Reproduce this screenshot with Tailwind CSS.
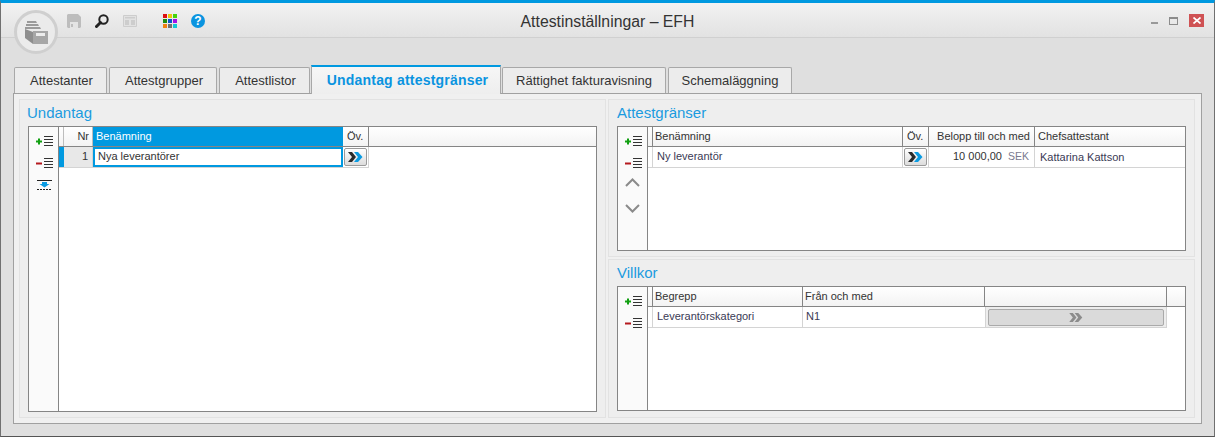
<!DOCTYPE html>
<html lang="sv">
<head>
    <meta charset="UTF-8">
    <title>Attestinställningar – EFH</title>
    <script src="https://cdn.jsdelivr.net/npm/@tailwindcss/browser@4"></script>
</head>
<body class="bg-[#dfdfdf] overflow-hidden">

    <!-- Shared toolbar icons -->
    <svg class="hidden">
        <symbol id="add" viewBox="0 0 17 11">
            <path d="M0 4.500h6v2H0zM2 2.500h2v6H2z" fill="#12a012"/>
            <path d="M8 .5h9M8 3.500h9M8 6.500h9M8 9.500h9" stroke="#333" fill="none"/>
        </symbol>
        <symbol id="remove" viewBox="0 0 17 11">
            <path d="M0 4.500h6v2H0z" fill="#b5191e"/>
            <path d="M8 .5h9M8 3.500h9M8 6.500h9M8 9.500h9" stroke="#333" fill="none"/>
        </symbol>
        <symbol id="go" viewBox="0 0 15 10">
            <path d="M0 0h4l4 5-4 5H0l4-5z" fill="#2b2b2b"/>
            <path d="M6 0h4l4.500 5-4.500 5H6l4-5z" fill="#0a9be2"/>
        </symbol>
    </svg>

    <div class="w-[1215px] h-[437px] flex flex-col border-t-[3px] border-t-[#0099e0] border-x border-b border-x-[#707070] border-b-[#555] bg-[#dfdfdf] font-['Liberation_Sans',sans-serif] relative">

        <!-- Round logo over the title bar -->
        <div class="absolute left-[13px] top-[7px] w-[44px] h-[44px] rounded-full border-[3px] border-[#cfcfcf] bg-[#ebebeb] flex items-center justify-center z-10">
            <svg width="23" height="23" viewBox="0 0 23 23">
                <path d="M2 0h9l1 2H2zM1 3h12l1 2H1zM0 6h15l1 2H0z" fill="#9a9a9a"/>
                <path d="M0 8l8 3v12l-8-6z" fill="#8e8e8e"/>
                <path d="M8 10h15v13H8z" fill="#a6a6a6"/>
                <path d="M11 12h9v3h-9z" fill="#ececec"/>
            </svg>
        </div>

        <!-- Title bar -->
        <header class="h-[35px] shrink-0 grid grid-cols-[1fr_auto_1fr] bg-gradient-to-b from-[#f2f2f2] to-[#e2e2e2] border-b border-[#d0d0d0]">
            <div class="flex items-start pl-[66px] pt-[11px]">
                <svg width="14" height="14" viewBox="0 0 14 14" class="mr-[14px]">
                    <path d="M1 0h10l3 3v10l-1 1H1l-1-1V1z" fill="#bdbdbd"/>
                    <path d="M3 8h8v6H3z" fill="#e4e4e4"/>
                    <path d="M4 10h2v3H4z" fill="#bdbdbd"/>
                </svg>
                <svg width="14" height="14" viewBox="0 0 14 14" class="mr-[14px]">
                    <circle cx="8.500" cy="5.500" r="4.200" fill="none" stroke="#222" stroke-width="2"/>
                    <path d="M5.500 8.500 1.500 12.500" stroke="#222" stroke-width="3" stroke-linecap="round"/>
                </svg>
                <svg width="14" height="12" viewBox="0 0 14 12" class="mr-[26px] mt-px">
                    <path d="M.5.500h13v11H.5z" fill="#e2e2e2" stroke="#cdcdcd"/>
                    <path d="M2 2h10v1.500H2zM2 5h4v5H2zM8 5h4v5H8z" fill="#cdcdcd"/>
                </svg>
                <div class="grid grid-cols-3 gap-px w-[14px] h-[14px] mr-[14px]">
                    <div class="bg-[#dd1010]"></div><div class="bg-[#ecc80c]"></div><div class="bg-[#44d40c]"></div>
                    <div class="bg-[#1e8c10]"></div><div class="bg-[#0a55cc]"></div><div class="bg-[#a012e8]"></div>
                    <div class="bg-[#f08010]"></div><div class="bg-[#707070]"></div><div class="bg-[#10c8d4]"></div>
                </div>
                <div class="w-[14px] h-[14px] rounded-full bg-[#0a94e0] text-white text-[12px] leading-[14px] font-bold text-center">?</div>
            </div>
            <h1 class="text-[15.8px] leading-[35px] pt-px text-[#333]">Attestinställningar – EFH</h1>
            <div class="flex items-start justify-end pt-[11px] pr-[10px]">
                <div class="w-[7px] h-[2px] bg-[#999] mt-[8px] mr-[11px]"></div>
                <div class="w-[9px] h-[8px] border border-t-2 border-[#8c8c8c] mt-[3px] mr-[11px]"></div>
                <div class="w-[15px] h-[13px] bg-[#cf5254] flex items-center justify-center">
                    <svg width="8" height="7" viewBox="0 0 8 7"><path d="M.5.500 7.500 6.500M7.500.500.500 6.500" stroke="#fff" stroke-width="1.700"/></svg>
                </div>
            </div>
        </header>

        <main class="flex-1 flex flex-col pl-[12px] pt-[27px]">
            <!-- Tabs -->
            <nav class="flex items-end h-[29px] pl-px gap-[2px] text-[13px] text-[#333] relative z-10 -mb-px">
                <div class="w-[93px] h-[26px] mb-px pl-[2px] flex items-center justify-center bg-[#ececec] border border-b-0 border-[#a8a8a8] rounded-t-[2px]">Attestanter</div>
                <div class="w-[108px] h-[26px] mb-px pl-[2px] flex items-center justify-center bg-[#ececec] border border-b-0 border-[#a8a8a8] rounded-t-[2px]">Attestgrupper</div>
                <div class="w-[91px] h-[26px] mb-px pl-[2px] flex items-center justify-center bg-[#ececec] border border-b-0 border-[#a8a8a8] rounded-t-[2px] mr-[-1px]">Attestlistor</div>
                <div class="w-[190px] h-[29px] flex items-center justify-center pl-[3px] bg-gradient-to-b from-[#f6f6f6] to-[#eeeeee] border-x border-[#a8a8a8] border-t-[2px] border-t-[#0099e0] text-[14px] tracking-[0.2px] font-bold text-[#0a94e0] mr-[-1px]">Undantag attestgränser</div>
                <div class="w-[164px] h-[26px] mb-px flex items-center justify-center bg-[#ececec] border border-b-0 border-[#a8a8a8] rounded-t-[2px]">Rättighet fakturavisning</div>
                <div class="w-[124px] h-[26px] mb-px flex items-center justify-center bg-[#ececec] border border-b-0 border-[#a8a8a8] rounded-t-[2px]">Schemaläggning</div>
            </nav>

            <!-- Tab panel -->
            <section class="w-[1189px] h-[331px] border border-[#a0a0a0] bg-[#f0f0f0] pt-[5px] pl-[5px] flex gap-[2px]">

                <!-- Undantag -->
                <div class="w-[587px] h-[319px] border border-[#e2e2e2] bg-[#eeeeee] px-[8px] flex flex-col">
                    <h2 class="h-[26px] -ml-px text-[15px] leading-[25px] text-[#1a9be0]">Undantag</h2>
                    <div class="w-[569px] h-[286px] border border-[#858585] bg-white flex text-[11px] text-[#333]">
                        <div class="w-[30px] shrink-0 border-r border-[#858585] bg-[#fafafa] flex flex-col items-center pt-[9px] pl-[2px] gap-[11px]">
                            <svg width="17" height="11"><use href="#add"/></svg>
                            <svg width="17" height="11"><use href="#remove"/></svg>
                            <svg width="15" height="10" viewBox="0 0 15 10">
                                <path d="M0 .5h15" stroke="#222"/>
                                <path d="M5 2h5v2h2.500L7.500 7.500 2.500 4H5z" fill="#0a9be2"/>
                                <path d="M0 9.500h15" stroke="#222" stroke-dasharray="2 1"/>
                            </svg>
                        </div>
                        <div class="flex-1">
                            <div class="h-[20px] flex border-b border-[#858585] bg-gradient-to-b from-white to-[#f3f3f3] leading-[18px]">
                                <div class="w-[5px] border-r border-[#bdbdbd]"></div>
                                <div class="w-[29px] pr-[3px] text-right border-r border-[#bdbdbd]">Nr</div>
                                <div class="w-[250px] px-[3px] bg-[#0099e0] text-white">Benämning</div>
                                <div class="w-[26px] pl-[4px] border-r border-[#858585]">Öv.</div>
                            </div>
                            <div class="h-[21px] w-[310px] flex border-b border-[#d4d4d4]">
                                <div class="w-[5px] bg-[#0099e0]"></div>
                                <div class="w-[29px] bg-[#e8e8e8] pr-[4px] text-right leading-[19px] border-r border-[#d4d4d4]">1</div>
                                <div class="w-[250px] border-[2px] border-[#0099e0] px-[3px] leading-[15px]">Nya leverantörer</div>
                                <div class="w-[26px] border-r border-[#d4d4d4] flex justify-center items-center">
                                    <div class="w-[23px] h-[18px] rounded-[2px] border border-[#9a9a9a] bg-gradient-to-b from-white to-[#dcdcdc] flex items-center justify-center">
                                        <svg width="15" height="10"><use href="#go"/></svg>
                                    </div>
                                </div>
                            </div>
                        </div>
                    </div>
                </div>

                <div class="flex flex-col gap-[2px]">
                    <!-- Attestgränser -->
                    <div class="w-[587px] h-[158px] border border-[#e2e2e2] bg-[#eeeeee] px-[8px] flex flex-col">
                        <h2 class="h-[26px] text-[15px] leading-[25px] text-[#1a9be0]">Attestgränser</h2>
                        <div class="w-[569px] h-[125px] border border-[#858585] bg-white flex text-[11px] text-[#333]">
                            <div class="w-[30px] shrink-0 border-r border-[#858585] bg-[#fafafa] flex flex-col items-center pt-[9px] pl-[2px] gap-[11px]">
                                <svg width="17" height="11"><use href="#add"/></svg>
                                <svg width="17" height="11"><use href="#remove"/></svg>
                                <svg width="15" height="9" viewBox="0 0 15 9" class="mt-[-2px] mr-[3px]"><path d="M1 8l6.500-6.500L14 8" fill="none" stroke="#8a8a8a" stroke-width="2"/></svg>
                                <svg width="15" height="9" viewBox="0 0 15 9" class="mt-[6px] mr-[3px]"><path d="M1 1l6.500 6.500L14 1" fill="none" stroke="#8a8a8a" stroke-width="2"/></svg>
                            </div>
                            <div class="flex-1">
                                <div class="h-[20px] flex border-b border-[#858585] bg-gradient-to-b from-white to-[#f3f3f3] leading-[18px]">
                                    <div class="w-[5px] border-r border-[#858585]"></div>
                                    <div class="w-[250px] px-[2px] border-r border-[#858585]">Benämning</div>
                                    <div class="w-[26px] pl-[4px] border-r border-[#858585]">Öv.</div>
                                    <div class="w-[106px] pr-[4px] text-right border-r border-[#858585]">Belopp till och med</div>
                                    <div class="flex-1 px-[3px]">Chefsattestant</div>
                                </div>
                                <div class="h-[21px] flex border-b border-[#d4d4d4]">
                                    <div class="w-[5px] bg-white border-r border-[#d4d4d4]"></div>
                                    <div class="w-[250px] px-[4px] leading-[19px] text-[#3a3a55] border-r border-[#d4d4d4]">Ny leverantör</div>
                                    <div class="w-[26px] border-r border-[#d4d4d4] flex justify-center items-center">
                                        <div class="w-[23px] h-[18px] rounded-[2px] border border-[#9a9a9a] bg-gradient-to-b from-white to-[#dcdcdc] flex items-center justify-center">
                                            <svg width="15" height="10"><use href="#go"/></svg>
                                        </div>
                                    </div>
                                    <div class="w-[106px] pr-[5px] text-right leading-[19px] border-r border-[#d4d4d4]">10 000,00 <span class="ml-[3px] text-[10.5px] text-[#7a7a90]">SEK</span></div>
                                    <div class="flex-1 px-[5px] leading-[20px] text-[#3a3a55]">Kattarina Kattson</div>
                                </div>
                            </div>
                        </div>
                    </div>

                    <!-- Villkor -->
                    <div class="w-[587px] h-[159px] border border-[#e2e2e2] bg-[#eeeeee] px-[8px] flex flex-col">
                        <h2 class="h-[26px] text-[15px] leading-[25px] text-[#1a9be0]">Villkor</h2>
                        <div class="w-[569px] h-[125px] border border-[#858585] bg-white flex text-[11px] text-[#333]">
                            <div class="w-[30px] shrink-0 border-r border-[#858585] bg-[#fafafa] flex flex-col items-center pt-[9px] pl-[2px] gap-[11px]">
                                <svg width="17" height="11"><use href="#add"/></svg>
                                <svg width="17" height="11"><use href="#remove"/></svg>
                            </div>
                            <div class="flex-1">
                                <div class="h-[20px] flex border-b border-[#858585] bg-gradient-to-b from-white to-[#f3f3f3] leading-[18px]">
                                    <div class="w-[5px] border-r border-[#858585]"></div>
                                    <div class="w-[150px] px-[2px] border-r border-[#858585]">Begrepp</div>
                                    <div class="w-[182px] px-[2px] border-r border-[#858585]">Från och med</div>
                                    <div class="w-[182px] border-r border-[#858585]"></div>
                                </div>
                                <div class="h-[21px] w-[519px] flex border-b border-[#d4d4d4]">
                                    <div class="w-[5px] border-r border-[#d4d4d4]"></div>
                                    <div class="w-[150px] px-[4px] leading-[19px] text-[#3a3a55] border-r border-[#d4d4d4]">Leverantörskategori</div>
                                    <div class="w-[182px] px-[3px] leading-[19px] text-[#3a3a55]">N1</div>
                                    <div class="w-[182px] bg-[#ededed] border-x border-[#d4d4d4] p-[2px] pb-[1px]">
                                        <div class="h-full rounded-[2px] border border-[#aaa] bg-[#dadada] flex items-center justify-center">
                                            <svg width="14" height="9" viewBox="0 0 15 10"><path d="M0 0h4l4 5-4 5H0l4-5zM6 0h4l4.500 5-4.500 5H6l4-5z" fill="#8c8c8c"/></svg>
                                        </div>
                                    </div>
                                </div>
                            </div>
                        </div>
                    </div>
                </div>
            </section>
        </main>
    </div>
</body>
</html>
